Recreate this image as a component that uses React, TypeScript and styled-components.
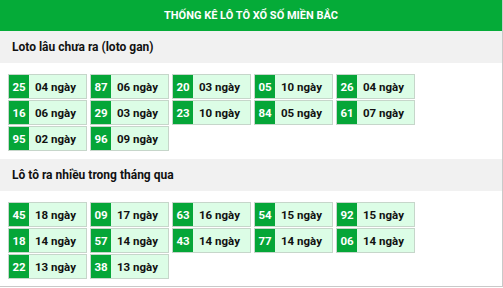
import React from "react";
import styled, { createGlobalStyle } from "styled-components";

const Global = createGlobalStyle`
  html, body { margin: 0; padding: 0; background: #fff; }
  body { font-family: Roboto, "Liberation Sans", Arial, sans-serif; }
`;

const Box = styled.div`
  width: 503px;
  height: 287px;
  box-sizing: border-box;
  border-right: 1px solid #c9c9c9;
  border-bottom: 1px solid #c9c9c9;
  background: #fff;
`;

const Header = styled.div`
  height: 31px;
  background: #05ab38;
  color: #fff;
  font-weight: 700;
  font-size: 11px;
  display: flex;
  align-items: center;
  justify-content: center;
`;

const SectionTitle = styled.div`
  height: 32px;
  background: #f1f1f1;
  display: flex;
  align-items: center;
  padding-left: 12px;
  font-size: 12px;
  font-weight: 700;
  color: #111;
`;

const Grid = styled.div<{ $bottom: number }>`
  display: flex;
  flex-wrap: wrap;
  column-gap: 3px;
  row-gap: 1px;
  padding: 11px 8px ${(p) => p.$bottom}px 8px;
  width: 420px;
`;

const Item = styled.div`
  width: 79px;
  height: 25px;
  box-sizing: border-box;
  border: 1px solid #c6d6ca;
  background: #dcfde6;
  display: flex;
  align-items: stretch;
`;

const Num = styled.span`
  width: 20px;
  background: #05a638;
  color: #fff;
  font-weight: 700;
  font-size: 11.5px;
  display: flex;
  align-items: center;
  justify-content: center;
`;

const Days = styled.span`
  padding-left: 6px;
  font-weight: 700;
  font-size: 11.5px;
  color: #111;
  display: flex;
  align-items: center;
`;

const gan: [string, string][] = [
  ["25", "04"], ["87", "06"], ["20", "03"], ["05", "10"], ["26", "04"],
  ["16", "06"], ["29", "03"], ["23", "10"], ["84", "05"], ["61", "07"],
  ["95", "02"], ["96", "09"],
];

const nhieu: [string, string][] = [
  ["45", "18"], ["09", "17"], ["63", "16"], ["54", "15"], ["92", "15"],
  ["18", "14"], ["57", "14"], ["43", "14"], ["77", "14"], ["06", "14"],
  ["22", "13"], ["38", "13"],
];

const List = ({ data, bottom }: { data: [string, string][]; bottom: number }) => (
  <Grid $bottom={bottom}>
    {data.map(([n, d]) => (
      <Item key={n}>
        <Num>{n}</Num>
        <Days>{d} ngày</Days>
      </Item>
    ))}
  </Grid>
);

export default function App() {
  return (
    <>
      <Global />
      <Box>
        <Header>THỐNG KÊ LÔ TÔ XỔ SỐ MIỀN BẮC</Header>
        <SectionTitle>Loto lâu chưa ra (loto gan)</SectionTitle>
        <List data={gan} bottom={8} />
        <SectionTitle>Lô tô ra nhiều trong tháng qua</SectionTitle>
        <List data={nhieu} bottom={8} />
      </Box>
    </>
  );
}
